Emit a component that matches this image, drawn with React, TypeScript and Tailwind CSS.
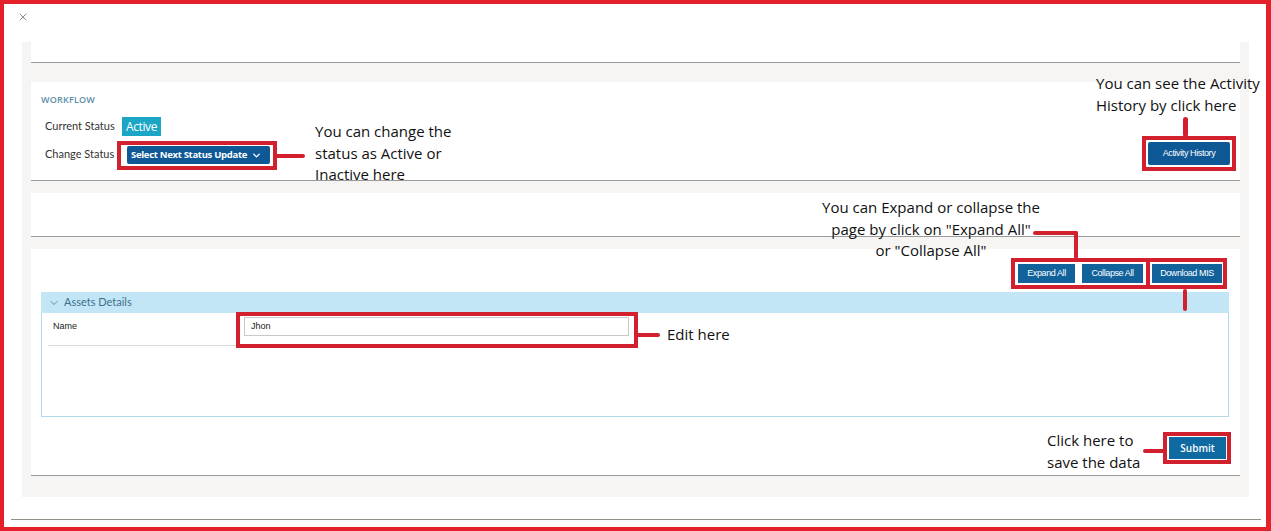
import React, { FC, ReactNode } from 'react';
import { ChevronDown, X } from 'lucide-react';

const RED = 'border-[#d3202e]';

const Note: FC<{ className: string; children: ReactNode }> = ({ className, children }) => (
    <div className={`absolute whitespace-nowrap text-[15px] leading-[21.5px] text-[#111] font-['Open_Sans',sans-serif] z-10 ${className}`}>
        {children}
    </div>
);

const Wire: FC<{ className: string }> = ({ className }) => (
    <span className={`absolute bg-[#d3202e] rounded-full z-10 ${className}`} />
);

const BlueButton: FC<{ className?: string; children: ReactNode }> = ({ className = '', children }) => (
    <button className={`flex items-center justify-center text-white text-[9px] tracking-[-0.4px] font-['Liberation_Sans',sans-serif] ${className}`}>
        {children}
    </button>
);

const WorkflowCard: FC = () => (
    <section className="mt-[19px] h-[99px] bg-white border-b border-[#9a9a9a] pl-[10px] pr-[4px] pt-[11px] pb-[10px] flex justify-between items-end">
        <div className="flex flex-col">
            <span className="h-[12px] leading-[12px] text-[9px] font-semibold text-[#5c8ea8] tracking-[0.2px]">WORKFLOW</span>

            <div className="mt-[11px] flex items-center pl-[4px]">
                <span className="w-[77px] whitespace-nowrap text-[11px] text-[#333] font-['Lato',sans-serif]">Current Status</span>
                <span className="h-[19px] px-[4px] flex items-center bg-[#1ba6c6] text-white text-[12px] tracking-[-0.4px]">Active</span>
            </div>

            <div className="mt-[5px] flex items-center pl-[4px]">
                <span className="w-[72px] whitespace-nowrap text-[11px] text-[#333] font-['Lato',sans-serif] -mt-[3px]">Change Status</span>
                <div className={`relative border-[4px] ${RED} pl-[6px] pr-[3px] pt-[1px] pb-[2px]`}>
                    <div className="w-[143px] h-[18px] bg-[#0e5896] rounded-[2px] flex items-center justify-between pl-[4px] pr-[8px] text-white text-[9.5px] font-bold tracking-[-0.3px]">
                        <span>Select Next Status Update</span>
                        <ChevronDown size={11} strokeWidth={3} />
                    </div>
                    <Wire className="left-full top-[9px] w-[32px] h-[4px]" />
                    <Note className="left-[194px] top-[-24px]">
                        You can change the<br />status as Active or<br />Inactive here
                    </Note>
                </div>
            </div>
        </div>

        <div className={`relative border-[4px] ${RED} p-[2px] -mb-[1px]`}>
            <BlueButton className="w-[82px] h-[23px] bg-[#0e5896] rounded-[2px]">Activity History</BlueButton>
            <Wire className="left-[37px] top-[-23px] w-[5px] h-[20px]" />
            <Note className="left-[-50px] top-[-67px]">
                You can see the Activity<br />History by click here
            </Note>
        </div>
    </section>
);

const AssetsCard: FC = () => (
    <section className="mt-[12px] bg-white border-b border-[#9a9a9a] pl-[10px] pr-[11px] pt-[9px] pb-[11px] flex flex-col">
        <div className="flex justify-end pr-[2px]">
            <div className="relative flex">
                <div className={`flex gap-[7px] border-[4px] ${RED} pl-[3px] pr-[3px] py-[2px]`}>
                    <BlueButton className="w-[57px] h-[19px] bg-[#11629b]">Expand All</BlueButton>
                    <BlueButton className="w-[61px] h-[19px] bg-[#11629b]">Collapse All</BlueButton>
                </div>
                <div className={`relative border-[4px] border-l-0 ${RED} pl-[2px] pr-[1px] py-[2px]`}>
                    <BlueButton className="w-[70px] h-[19px] bg-[#11629b]">Download MIS</BlueButton>
                    <Wire className="left-[33px] top-[27px] w-[4px] h-[22px]" />
                </div>
                <Wire className="left-[22px] top-[-27px] w-[45px] h-[4px]" />
                <Wire className="left-[63px] top-[-27px] w-[4px] h-[28px]" />
                <Note className="left-[-200px] top-[-61px] w-[240px] text-center">
                    You can Expand or collapse the<br />page by click on &quot;Expand All&quot;<br />or &quot;Collapse All&quot;
                </Note>
            </div>
        </div>

        <div className="mt-[3px] h-[21px] bg-[#c3e6f6] flex items-center pl-[7px] gap-[4px] text-[#3e6f8c]">
            <ChevronDown size={12} strokeWidth={1.5} />
            <span className="text-[11px] font-['Lato',sans-serif]">Assets Details</span>
        </div>

        <div className="h-[104px] border border-t-0 border-[#b3d9e8] pl-[6px]">
            <div className="flex items-start">
                <div className="w-[188px] h-[33px] border-b border-[#dcdcdc] pl-[5px] pt-[7px] text-[9px] leading-[12px] text-[#222] font-['Liberation_Sans',sans-serif]">
                    Name
                </div>
                <div className={`relative border-[4px] ${RED} pl-[4px] pr-[5px] pt-[1px] pb-[8px] -mt-[1px]`}>
                    <div className="w-[385px] h-[19px] border border-[#c9c9c9] pl-[6px] flex items-center text-[9px] text-[#222] font-['Liberation_Sans',sans-serif]">
                        Jhon
                    </div>
                    <Wire className="left-full top-[17px] w-[26px] h-[4px]" />
                    <Note className="left-[427px] top-[8px]">Edit here</Note>
                </div>
            </div>
        </div>

        <div className="mt-[15px] flex justify-end -mr-[2px]">
            <div className={`relative border-[4px] ${RED} pl-[2px] pr-[1px] py-[1px]`}>
                <BlueButton className="w-[57px] h-[22px] bg-[#0f6aa1] text-[10px] tracking-[0px] font-['Open_Sans',sans-serif] font-semibold">Submit</BlueButton>
                <Wire className="left-[-24px] top-[13px] w-[22px] h-[4px]" />
                <Note className="left-[-120px] top-[-6px]">
                    Click here to<br />save the data
                </Note>
            </div>
        </div>
    </section>
);

export default function App() {
    return (
        <div className="w-[1271px] h-[531px] overflow-hidden bg-white border-[4px] border-r-[5px] border-[#e4212a] flex flex-col font-['Open_Sans',sans-serif]">
            <header className="h-[38px] pl-[13px] pt-[7px] text-[#666]">
                <X size={12} strokeWidth={1.5} />
            </header>

            <main className="ml-[18px] w-[1227px] bg-[#f7f4f4] px-[9px] pb-[21px] flex flex-col">
                <section className="h-[21px] bg-white border-b border-[#9a9a9a]" />
                <WorkflowCard />
                <section className="mt-[12px] h-[44px] bg-white border-b border-[#9a9a9a]" />
                <AssetsCard />
            </main>

            <div className="mt-[22px] ml-[7px] w-[1250px] border-t border-[#8f8f86]" />
        </div>
    );
}
